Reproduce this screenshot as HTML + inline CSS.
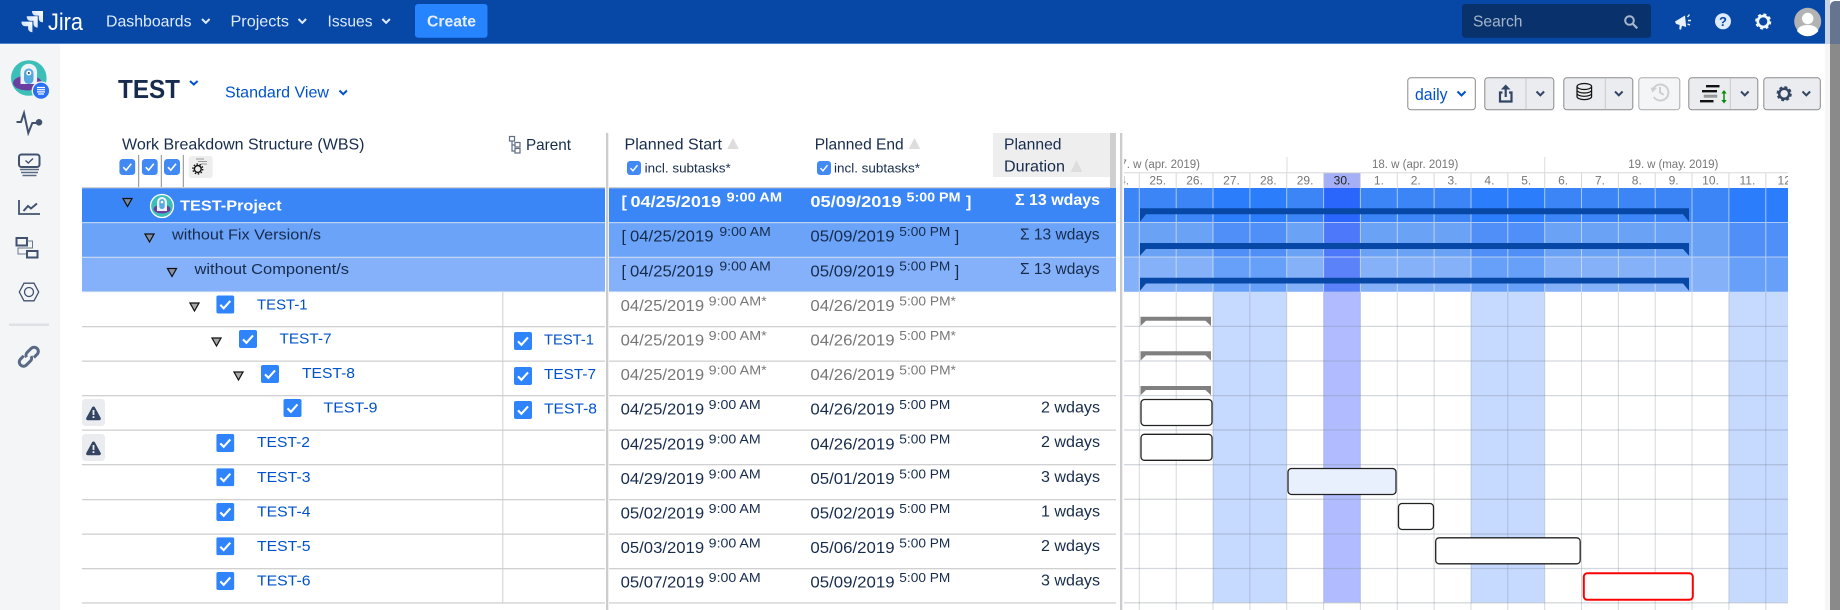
<!DOCTYPE html>
<html><head><meta charset="utf-8"><title>TEST</title>
<style>
html,body{margin:0;padding:0;background:#fff;width:1840px;height:610px;overflow:hidden}
svg{position:absolute;left:0;top:0;display:block}
text{font-family:"Liberation Sans",sans-serif}
.d{font-size:16px;fill:#172B4D}
.s{font-size:13px;fill:#172B4D}
.w{fill:#fff;font-weight:bold}
.g{fill:#777}
.l{font-size:15px;fill:#0052CC}
.day{font-size:12px;fill:#777;text-anchor:middle}
.h{font-size:16px;fill:#172B4D}
</style></head><body>
<svg width="1840" height="610" viewBox="0 0 1840 610" xmlns="http://www.w3.org/2000/svg">
<defs>
<symbol id="cb" viewBox="0 0 18 18"><rect width="18" height="18" rx="2" fill="#2F84FB"/><path d="M4 9.4l3.400 3.400L14 5.400" fill="none" stroke="#fff" stroke-width="2.100"/></symbol>
<symbol id="cs" viewBox="0 0 16 16"><rect width="16" height="16" rx="3.500" fill="#4289F3"/><path d="M4 8.200l2.800 3L12 4.800" fill="none" stroke="#fff" stroke-width="1.600"/></symbol>
<symbol id="tr" viewBox="0 0 11 10"><path d="M1 1H10L5.500 9Z" fill="#8a8a8a" fill-opacity=".75" stroke="#111" stroke-width="1.200"/></symbol>
<symbol id="wn" viewBox="0 0 23 27"><rect width="23" height="27" rx="3.500" fill="#EBECF0"/><path d="M11.500 7.500c.7 0 1.100.3 1.500 1l5.600 10.300c.7 1.200 0 2.400-1.300 2.400H5.700c-1.300 0-2-1.200-1.300-2.400L10 8.500c.4-.7.8-1 1.500-1z" fill="#344563"/><rect x="10.600" y="11" width="1.800" height="5" fill="#EBECF0"/><rect x="10.600" y="17.200" width="1.800" height="1.800" fill="#EBECF0"/></symbol>
<clipPath id="gc"><rect x="1124" y="150" width="664" height="460"/></clipPath>
<linearGradient id="jg" x1="1" y1="0" x2="0" y2="1"><stop offset="0" stop-color="#fff"/><stop offset="1" stop-color="#b9d3f5"/></linearGradient>
</defs>

<!-- backgrounds -->
<rect width="1840" height="610" fill="#fff"/>
<rect y="44" width="60" height="566" fill="#F4F5F7"/>
<rect width="1825" height="43" fill="#0747A6"/>
<rect y="43" width="1825" height="1" fill="#4C84D0"/>

<!-- nav -->
<g fill="url(#jg)">
<path d="M32 11h11v11.300c-2.600 0-4.300-1.600-4.300-4.100V15.600h-3C33.500 15.600 32 13.800 32 11z"/>
<path d="M26.700 16.300h11v11.300c-2.600 0-4.300-1.600-4.300-4.100V20.900h-3c-2.200 0-3.700-1.800-3.700-4.600z"/>
<path d="M21.400 21.600h11v10.600c-2.600 0-4.300-1.500-4.300-3.900v-2.100h-3c-2.200 0-3.700-1.800-3.700-4.600z"/>
</g>
<text x="48" y="30" font-size="24" fill="#fff" textLength="35" lengthAdjust="spacingAndGlyphs">Jira</text>
<g font-size="16" fill="#DEEBFF">
<text x="106" y="26.500" textLength="85.500" lengthAdjust="spacingAndGlyphs">Dashboards</text>
<text x="230.500" y="26.500" textLength="58.500" lengthAdjust="spacingAndGlyphs">Projects</text>
<text x="327.500" y="26.500" textLength="45" lengthAdjust="spacingAndGlyphs">Issues</text>
</g>
<g fill="none" stroke="#DEEBFF" stroke-width="2">
<path d="M202 19l3.800 3.800 3.800-3.800M298.500 19l3.800 3.800 3.800-3.800M382.300 19l3.800 3.800 3.800-3.800"/>
</g>
<rect x="415" y="4" width="72.500" height="33.700" rx="3" fill="#2684FF"/>
<text x="427" y="26.500" font-size="16" font-weight="bold" fill="#E4EEFC" textLength="49" lengthAdjust="spacingAndGlyphs">Create</text>
<rect x="1462" y="4" width="189" height="33.700" rx="3" fill="#09326C"/>
<text x="1473" y="26.500" font-size="16" fill="#A5B5CC" textLength="49.500" lengthAdjust="spacingAndGlyphs">Search</text>
<circle cx="1629.500" cy="20.500" r="4.300" fill="none" stroke="#A5B5CC" stroke-width="2"/><path d="M1632.800 23.800l4.500 4.500" stroke="#A5B5CC" stroke-width="2.200"/>
<path d="M1675 21.500l10-6 1.200 11.500-4.200-1.300-1 4-1.700-.4.300-4.300-3.600-1.100z" fill="#EAF1FC"/>
<path d="M1687.500 17l2-2.500M1688 20.500h3M1687.500 24l2.500 1" stroke="#EAF1FC" stroke-width="1.400"/>
<circle cx="1723" cy="21.300" r="8" fill="#DEEBFF"/>
<text x="1723" y="26" font-size="13" font-weight="bold" fill="#0747A6" text-anchor="middle">?</text>
<circle cx="1763.200" cy="21.500" r="5.400" fill="none" stroke="#F2F6FD" stroke-width="2.600"/>
<circle cx="1763.200" cy="21.500" r="7.200" fill="none" stroke="#F2F6FD" stroke-width="1.800" stroke-dasharray="3 2.650"/>
<circle cx="1807.700" cy="21.300" r="13.500" fill="#B3B3B3"/>
<circle cx="1807.700" cy="18.500" r="5.700" fill="#fff"/>
<path d="M1797 31c1.500-4.500 5.500-6 10.700-6s9.200 1.500 10.700 6a13.500 13.500 0 0 1-21.400 0z" fill="#fff"/>

<!-- scrollbar -->
<rect x="1825" y="0" width="5" height="44" fill="#C7D4E8"/>
<rect x="1825" y="44" width="5" height="566" fill="#F6F6F6"/>
<rect x="1830" y="1" width="14" height="60" rx="5" fill="#66758F"/>
<rect x="1830" y="44" width="10" height="566" fill="#8A8A8A"/>

<!-- sidebar icons -->
<circle cx="28.800" cy="78" r="17.800" fill="#3CBFB8"/>
<ellipse cx="27.500" cy="83" rx="14.500" ry="7.500" fill="#6B3FA0"/>
<path d="M20.500 84V72a8.300 8.300 0 0 1 16.600 0V84z" fill="#EEF3F8"/>
<rect x="24" y="68.500" width="9.500" height="15.500" rx="4.700" fill="#55A9E0"/>
<circle cx="28.800" cy="73" r="2.500" fill="#fff"/><circle cx="28.800" cy="73" r="1" fill="#335"/>
<circle cx="41" cy="90.700" r="8.700" fill="#2B6FF6" stroke="#F4F5F7" stroke-width="1.300"/>
<path d="M37 87.500h8M37 89.700h8M37 91.900h8M38 94h6" stroke="#fff" stroke-width="1.200"/>
<g fill="none" stroke="#42526E">
<path d="M16.500 122H21L24 113L28.300 133L32.300 123H37" stroke-width="2"/>
<rect x="19" y="154.500" width="20.500" height="12.500" rx="2.500" stroke-width="2"/>
<path d="M25.500 160.500l2.800 2.500 4.700-4.500" stroke-width="1.400"/>
<path d="M20 169.500h19M21 172.500h17M22.500 175.500h14" stroke-width="1.500" stroke="#5A6A85"/>
<path d="M19 200V214H40" stroke-width="1.800"/>
<path d="M23.500 211l4.500-5 3 2.500 6-5" stroke-width="2"/>
<rect x="16.500" y="238" width="10.500" height="7.500" stroke-width="2"/>
<rect x="27" y="251" width="10.500" height="6.500" stroke-width="2"/>
<path d="M27 241h5.500v7H18v6h8" stroke-width="1" stroke="#6B778C"/>
<path d="M19.300 292L24 283.200H34L38.700 292L34 300.800H24Z" stroke-width="1.300"/>
<circle cx="29" cy="292" r="4.500" stroke-width="1.300"/>
<g transform="translate(28.800 356.700) rotate(-45)" stroke="#5A6A85" stroke-width="3"><path d="M-3 -4.200H-7.500a4.200 4.200 0 0 0 0 8.400H-2a4 4 0 0 0 4-3"/><path d="M3 4.200H7.500a4.200 4.200 0 0 0 0-8.400H2a4 4 0 0 0-4 3"/></g>
</g>
<circle cx="36.500" cy="122.300" r="0" fill="#42526E"/>
<circle cx="39" cy="122.300" r="3.300" fill="#42526E"/>
<rect x="9" y="323.500" width="40" height="2.500" fill="#DFE1E6"/>

<!-- title area -->
<text x="118" y="98" font-size="26" font-weight="bold" fill="#172B4D" textLength="62" lengthAdjust="spacingAndGlyphs">TEST</text>
<path d="M190 81l3.800 3.500L197.600 81" fill="none" stroke="#0052CC" stroke-width="2"/>
<text x="225" y="97.500" font-size="16" fill="#0052CC" textLength="104" lengthAdjust="spacingAndGlyphs">Standard View</text>
<path d="M339.500 90.500l3.700 3.700 3.700-3.700" fill="none" stroke="#0052CC" stroke-width="2"/>

<!-- toolbar -->
<rect x="1407.800" y="77.800" width="67.500" height="32" rx="3" fill="#fff" stroke="#8A8A8A"/>
<text x="1415" y="100" font-size="17" fill="#0052CC" textLength="32.500" lengthAdjust="spacingAndGlyphs">daily</text>
<path d="M1457.500 91.500l4 4 4-4" fill="none" stroke="#0052CC" stroke-width="2"/>
<g fill="#EBECF0" stroke="#8A8A8A">
<rect x="1484.800" y="77.800" width="69" height="32" rx="3"/>
<rect x="1563.800" y="77.800" width="69" height="32" rx="3"/>
<rect x="1688.800" y="77.800" width="69" height="32" rx="3"/>
<rect x="1763.800" y="77.800" width="56.500" height="32" rx="3"/>
</g>
<rect x="1638.800" y="77.800" width="41" height="32" rx="3" fill="#F4F5F7" stroke="#AAAAAA"/>
<path d="M1526 78V109.500M1605.300 78V109.500M1730.300 78V109.500" stroke="#C8C8C8"/>
<g fill="none" stroke="#344563" stroke-width="2">
<path d="M1536.500 91.500l3.800 3.800 3.800-3.800M1615 91.500l3.800 3.800 3.800-3.800M1741 91.500l3.800 3.800 3.800-3.800M1802.500 91.500l3.800 3.800 3.800-3.800"/>
<path d="M1502.500 92.500H1500V101.500H1511.500V92.500H1509" stroke-width="2.200"/>
<path d="M1505.700 97V88" stroke-width="2.200"/>
</g>
<path d="M1505.700 84.500l4.800 5h-9.600z" fill="#344563"/>
<g fill="none" stroke="#111" stroke-width="1.200">
<ellipse cx="1584.300" cy="86.500" rx="7.300" ry="3"/>
<path d="M1577 86.500V96.500C1577 98.300 1580.200 99.600 1584.300 99.600S1591.600 98.300 1591.600 96.500V86.500M1577 90C1577 91.700 1580.200 93 1584.300 93S1591.600 91.700 1591.600 90M1577 93.300C1577 95 1580.200 96.300 1584.300 96.300S1591.600 95 1591.600 93.300"/>
</g>
<g fill="none" stroke="#CFCFCF" stroke-width="2"><path d="M1653.500 88.500a8 8 0 1 1 .3 8.500"/><path d="M1660 87v5.500l3.800 2.300"/></g>
<path d="M1650.500 87.500l6.500.5-4.500 4.500z" fill="#CFCFCF"/>
<rect x="1706" y="85" width="13.500" height="2.400" fill="#111"/>
<rect x="1702" y="90" width="15" height="2.400" fill="#111"/>
<rect x="1704" y="95" width="13" height="2.400" fill="#999" stroke="#888" stroke-width=".5"/>
<rect x="1700" y="100" width="13.500" height="2.400" fill="#111"/>
<path d="M1724 92.500V101" stroke="#0A8A0A" stroke-width="1.500"/>
<path d="M1724 90l2.700 3.500h-5.400zM1724 103.500l2.700-3.500h-5.400z" fill="#0A8A0A"/>
<circle cx="1784.200" cy="93.700" r="5" fill="none" stroke="#344563" stroke-width="2.500"/>
<circle cx="1784.200" cy="93.700" r="6.700" fill="none" stroke="#344563" stroke-width="1.800" stroke-dasharray="3 2.260"/>

<!-- headers -->
<text x="122" y="149.500" class="h" textLength="242.500" lengthAdjust="spacingAndGlyphs">Work Breakdown Structure (WBS)</text>
<use href="#cs" x="119.300" y="159" width="16" height="16"/>
<use href="#cs" x="141.800" y="159" width="16" height="16"/>
<use href="#cs" x="164" y="159" width="16" height="16"/>
<path d="M138.700 155V188M161.300 155V188M183.300 155V188" stroke="#8A8A8A"/>
<rect x="188.700" y="156" width="24" height="22" rx="3" fill="#EEEEEE"/>
<path d="M196 159h8M198 161.500h9M201 164h6" stroke="#999" stroke-width="1"/>
<circle cx="197.800" cy="169" r="3.400" fill="none" stroke="#111" stroke-width="1.400"/>
<circle cx="197.800" cy="169" r="4.900" fill="none" stroke="#111" stroke-width="1.400" stroke-dasharray="1.500 1.590"/>
<g fill="none" stroke="#5E6C84" stroke-width="1.200"><rect x="509.500" y="136.500" width="5" height="4.500"/><rect x="515" y="142.500" width="5" height="4.500"/><rect x="515" y="148.500" width="5" height="4.500"/><path d="M512 141V151H515M512 145H515"/></g>
<text x="526" y="150" class="h" textLength="45" lengthAdjust="spacingAndGlyphs">Parent</text>

<text x="624.500" y="149.500" class="h" textLength="97.500" lengthAdjust="spacingAndGlyphs">Planned Start</text>
<path d="M733 138l5.800 11H727.200z" fill="#DDDDDD"/>
<use href="#cs" x="627" y="161" width="14" height="14"/>
<text x="644.700" y="172.500" font-size="13" fill="#172B4D" textLength="86" lengthAdjust="spacingAndGlyphs">incl. subtasks*</text>
<text x="814.700" y="149.500" class="h" textLength="89" lengthAdjust="spacingAndGlyphs">Planned End</text>
<path d="M914.500 138l5.800 11H908.700z" fill="#DDDDDD"/>
<use href="#cs" x="817" y="161" width="14" height="14"/>
<text x="834" y="172.500" font-size="13" fill="#172B4D" textLength="86" lengthAdjust="spacingAndGlyphs">incl. subtasks*</text>
<rect x="993" y="133" width="117" height="44" fill="#EEEEEE"/>
<rect x="1110" y="133" width="6" height="55" fill="#CFCFCF"/>
<text x="1004" y="149.500" class="h" textLength="57.500" lengthAdjust="spacingAndGlyphs">Planned</text>
<text x="1004" y="171.500" class="h" textLength="61" lengthAdjust="spacingAndGlyphs">Duration</text>
<path d="M1076.500 160l5.800 12H1070.700z" fill="#DDDDDD"/>

<!-- left rows bg -->
<rect x="82" y="188" width="523" height="34.600" fill="#3B86F6"/>
<rect x="82" y="222.600" width="523" height="34.600" fill="#6AA3F7"/>
<rect x="82" y="257.200" width="523" height="34.600" fill="#84B1F9"/>
<rect x="609" y="188" width="507" height="34.600" fill="#3B86F6"/>
<rect x="609" y="222.600" width="507" height="34.600" fill="#6AA3F7"/>
<rect x="609" y="257.200" width="507" height="34.600" fill="#84B1F9"/>

<!-- gantt -->
<g clip-path="url(#gc)">
<rect x="1323.600" y="173" width="36.800" height="15" fill="#A5AFF5"/>
<path d="M1287 157V173M1544.700 157V173" stroke="#DDDDDD"/>
<path d="M1124 172.700H1788M1139.300 173V188M1176.200 173V188M1213 173V188M1249.900 173V188M1286.700 173V188M1323.600 173V188M1360.400 173V188M1397.300 173V188M1434.100 173V188M1471 173V188M1507.800 173V188M1544.700 173V188M1581.500 173V188M1618.400 173V188M1655.200 173V188M1692 173V188M1728.900 173V188M1765.800 173V188" stroke="#D8D8D8"/>
<g font-size="11.500" fill="#777">
<text x="1114" y="168" textLength="86" lengthAdjust="spacing">17. w (apr. 2019)</text>
<text x="1372" y="168" textLength="86.300" lengthAdjust="spacing">18. w (apr. 2019)</text>
<text x="1628.300" y="168" textLength="90" lengthAdjust="spacing">19. w (may. 2019)</text>
</g>
<g class="days">
<text x="1120.800" y="184.500" class="day">24.</text><text x="1157.700" y="184.500" class="day">25.</text><text x="1194.600" y="184.500" class="day">26.</text><text x="1231.500" y="184.500" class="day">27.</text><text x="1268.300" y="184.500" class="day">28.</text><text x="1305.100" y="184.500" class="day">29.</text><text x="1342" y="184.500" class="day" style="fill:#222">30.</text><text x="1378.900" y="184.500" class="day">1.</text><text x="1415.700" y="184.500" class="day">2.</text><text x="1452.500" y="184.500" class="day">3.</text><text x="1489.400" y="184.500" class="day">4.</text><text x="1526.200" y="184.500" class="day">5.</text><text x="1563.100" y="184.500" class="day">6.</text><text x="1600" y="184.500" class="day">7.</text><text x="1636.800" y="184.500" class="day">8.</text><text x="1673.600" y="184.500" class="day">9.</text><text x="1710.500" y="184.500" class="day">10.</text><text x="1747.400" y="184.500" class="day">11.</text><text x="1784.200" y="184.500" class="day">12</text>
</g>
<rect x="1124" y="188" width="664" height="34.600" fill="#3B85F6"/>
<rect x="1124" y="222.600" width="664" height="34.600" fill="#6AA2F6"/>
<rect x="1124" y="257.200" width="664" height="34.600" fill="#85B1F9"/>
<g fill="#2B7DFB"><rect x="1213" y="188" width="73.700" height="34.600"/><rect x="1471" y="188" width="73.700" height="34.600"/><rect x="1728.900" y="188" width="60" height="34.600"/></g>
<g fill="#4F8FF7"><rect x="1213" y="222.600" width="73.700" height="34.600"/><rect x="1471" y="222.600" width="73.700" height="34.600"/><rect x="1728.900" y="222.600" width="60" height="34.600"/></g>
<g fill="#66A0F9"><rect x="1213" y="257.200" width="73.700" height="34.600"/><rect x="1471" y="257.200" width="73.700" height="34.600"/><rect x="1728.900" y="257.200" width="60" height="34.600"/></g>
<g fill="#C6D9FF"><rect x="1213" y="291.800" width="73.700" height="310.700"/><rect x="1471" y="291.800" width="73.700" height="310.700"/><rect x="1728.900" y="291.800" width="60" height="310.700"/></g>
<rect x="1323.600" y="188" width="36.800" height="34.600" fill="#2A66FB"/>
<rect x="1323.600" y="222.600" width="36.800" height="34.600" fill="#4D78F9"/>
<rect x="1323.600" y="257.200" width="36.800" height="34.600" fill="#5C82FA"/>
<rect x="1323.600" y="291.800" width="36.800" height="310.700" fill="#B0BCFF"/>
<path d="M1139.300 188V292M1176.200 188V292M1213 188V292M1249.900 188V292M1286.700 188V292M1323.600 188V292M1360.400 188V292M1397.300 188V292M1434.100 188V292M1471 188V292M1507.800 188V292M1544.700 188V292M1581.500 188V292M1618.400 188V292M1655.200 188V292M1692 188V292M1728.900 188V292M1765.800 188V292M1124 222.500H1788M1124 257H1788" stroke="#DCE4F2" stroke-opacity=".7"/>
<path d="M1139.300 292V610M1176.200 292V610M1213 292V610M1249.900 292V610M1286.700 292V610M1323.600 292V610M1360.400 292V610M1397.300 292V610M1434.100 292V610M1471 292V610M1507.800 292V610M1544.700 292V610M1581.500 292V610M1618.400 292V610M1655.200 292V610M1692 292V610M1728.900 292V610M1765.800 292V610" stroke="#828C9E" stroke-opacity=".34"/>
<path d="M1124 326.400H1788M1124 361H1788M1124 395.600H1788M1124 430H1788M1124 464.700H1788M1124 499.300H1788M1124 534H1788M1124 568.500H1788M1124 602.800H1788" stroke="#828C9E" stroke-opacity=".34" stroke-width="1.300"/>
<g fill="#0747A6">
<path d="M1140 208.300H1689V221.700L1683 214.300H1146L1140 221.700Z"/>
<path d="M1140 243H1689V255.700L1683 249H1146L1140 255.700Z"/>
<path d="M1140 277.700H1689V290.700L1683 283.500H1146L1140 290.700Z"/>
</g>
<g fill="#808080">
<path d="M1140.500 316.700H1211V326L1205.500 320.800H1146L1140.500 326Z"/>
<path d="M1140.500 351.300H1211V360.600L1205.500 355.400H1146L1140.500 360.600Z"/>
<path d="M1140.500 386H1211V395.300L1205.500 390H1146L1140.500 395.300Z"/>
</g>
<g stroke="#222" stroke-width="1.300" fill="#fff">
<rect x="1141" y="399.500" width="71" height="26" rx="3.500"/>
<rect x="1141" y="434.300" width="71" height="26" rx="3.500"/>
<rect x="1288" y="468.500" width="108" height="26" rx="3.500" fill="#E8EFFD"/>
<rect x="1398.500" y="503.500" width="35" height="26" rx="3.500"/>
<rect x="1435.700" y="537.800" width="144.500" height="26" rx="3.500"/>
</g>
<rect x="1583.800" y="573.300" width="109" height="26.500" rx="3.500" fill="#fff" stroke="#FF0000" stroke-width="2"/>
</g>

<!-- left table lines -->
<g fill="#D0D0D0">
<rect x="82" y="187" width="523" height="1.300"/><rect x="609" y="187" width="501" height="1.300"/>
<rect x="82" y="326" width="523" height="1.300"/><rect x="609" y="326" width="507" height="1.300"/>
<rect x="82" y="360.500" width="523" height="1.300"/><rect x="609" y="360.500" width="507" height="1.300"/>
<rect x="82" y="395" width="523" height="1.300"/><rect x="609" y="395" width="507" height="1.300"/>
<rect x="82" y="429.500" width="523" height="1.300"/><rect x="609" y="429.500" width="507" height="1.300"/>
<rect x="82" y="464" width="523" height="1.300"/><rect x="609" y="464" width="507" height="1.300"/>
<rect x="82" y="499" width="523" height="1.300"/><rect x="609" y="499" width="507" height="1.300"/>
<rect x="82" y="533.500" width="523" height="1.300"/><rect x="609" y="533.500" width="507" height="1.300"/>
<rect x="82" y="568" width="523" height="1.300"/><rect x="609" y="568" width="507" height="1.300"/>
<rect x="82" y="602.300" width="523" height="1.300"/><rect x="609" y="602.300" width="507" height="1.300"/>
<rect x="502.300" y="292" width="1" height="310.500"/>
</g>
<g fill="#DCE4F2" fill-opacity=".75"><rect x="82" y="222" width="523" height="1.200"/><rect x="609" y="222" width="507" height="1.200"/><rect x="82" y="256.700" width="523" height="1.200"/><rect x="609" y="256.700" width="507" height="1.200"/><rect x="82" y="291.300" width="523" height="1"/><rect x="609" y="291.300" width="507" height="1"/></g>
<rect x="606" y="133" width="2.300" height="477" fill="#CCCCCC"/>
<rect x="1120" y="133" width="2.300" height="477" fill="#CCCCCC"/>

<!-- WBS column -->
<use href="#tr" x="122" y="197.500" width="11" height="10"/>
<circle cx="162" cy="206" r="11.500" fill="#3CBFB8" stroke="#fff" stroke-width="1.300"/>
<ellipse cx="162" cy="209" rx="8.500" ry="4.500" fill="#6B3FA0"/>
<path d="M157 211v-9a5 5 0 0 1 10 0v9z" fill="#EEF3F8"/><rect x="159.300" y="199" width="5.400" height="10" rx="2.700" fill="#55A9E0"/><circle cx="162" cy="202" r="1.300" fill="#fff"/>
<text x="180" y="210.500" font-size="15" class="w" textLength="101.500" lengthAdjust="spacingAndGlyphs">TEST-Project</text>
<use href="#tr" x="144" y="233" width="11" height="10"/>
<text x="172" y="239.400" font-size="15" fill="#172B4D" textLength="149" lengthAdjust="spacingAndGlyphs">without Fix Version/s</text>
<use href="#tr" x="166.500" y="267.500" width="11" height="10"/>
<text x="194.500" y="274" font-size="15" fill="#172B4D" textLength="154.500" lengthAdjust="spacingAndGlyphs">without Component/s</text>

<use href="#tr" x="189" y="302" width="11" height="10"/>
<use href="#cb" x="216.300" y="295.500" width="18" height="18"/>
<text x="257" y="309.400" class="l" textLength="50.600" lengthAdjust="spacingAndGlyphs">TEST-1</text>
<use href="#tr" x="211" y="337" width="11" height="10"/>
<use href="#cb" x="239" y="330" width="18" height="18"/>
<text x="279.500" y="343.400" class="l" textLength="52" lengthAdjust="spacingAndGlyphs">TEST-7</text>
<use href="#cb" x="514" y="332" width="18" height="18"/>
<text x="544" y="344.400" class="l" textLength="50" lengthAdjust="spacingAndGlyphs">TEST-1</text>
<use href="#tr" x="233" y="371" width="11" height="10"/>
<use href="#cb" x="261" y="365" width="18" height="18"/>
<text x="302" y="378" class="l" textLength="53" lengthAdjust="spacingAndGlyphs">TEST-8</text>
<use href="#cb" x="514" y="367" width="18" height="18"/>
<text x="544" y="379" class="l" textLength="52" lengthAdjust="spacingAndGlyphs">TEST-7</text>
<use href="#wn" x="82" y="399" width="23" height="27"/>
<use href="#cb" x="283.500" y="399" width="18" height="18"/>
<text x="323.500" y="412.400" class="l" textLength="54" lengthAdjust="spacingAndGlyphs">TEST-9</text>
<use href="#cb" x="514" y="401" width="18" height="18"/>
<text x="544" y="413.400" class="l" textLength="53" lengthAdjust="spacingAndGlyphs">TEST-8</text>
<use href="#wn" x="82" y="434" width="23" height="27"/>
<use href="#cb" x="216.300" y="434" width="18" height="18"/>
<text x="257" y="447" class="l" textLength="53" lengthAdjust="spacingAndGlyphs">TEST-2</text>
<use href="#cb" x="216.300" y="468.300" width="18" height="18"/>
<text x="257" y="482" class="l" textLength="53.500" lengthAdjust="spacingAndGlyphs">TEST-3</text>
<use href="#cb" x="216.300" y="503" width="18" height="18"/>
<text x="257" y="516.400" class="l" textLength="53.500" lengthAdjust="spacingAndGlyphs">TEST-4</text>
<use href="#cb" x="216.300" y="537.300" width="18" height="18"/>
<text x="257" y="551" class="l" textLength="53.500" lengthAdjust="spacingAndGlyphs">TEST-5</text>
<use href="#cb" x="216.300" y="572" width="18" height="18"/>
<text x="257" y="585.400" class="l" textLength="53.500" lengthAdjust="spacingAndGlyphs">TEST-6</text>

<!-- dates: summary rows -->
<g class="d w">
<text x="621.500" y="207" class="d w">[</text>
<text x="630.500" y="207" class="d w" textLength="90.500" lengthAdjust="spacingAndGlyphs">04/25/2019</text>
<text x="726.500" y="201.500" class="s w" textLength="55.500" lengthAdjust="spacingAndGlyphs">9:00 AM</text>
<text x="810.400" y="207" class="d w" textLength="91.300" lengthAdjust="spacingAndGlyphs">05/09/2019</text>
<text x="906.500" y="201.500" class="s w" textLength="54" lengthAdjust="spacingAndGlyphs">5:00 PM</text>
<text x="966" y="207" class="d w">]</text>
<text x="1015" y="205" class="d w" textLength="85" lengthAdjust="spacingAndGlyphs">Σ 13 wdays</text>
</g>
<text x="621.500" y="241.700" class="d">[</text>
<text x="630" y="241.700" class="d" textLength="83.500" lengthAdjust="spacingAndGlyphs">04/25/2019</text>
<text x="719.400" y="236.100" class="s" textLength="51.400" lengthAdjust="spacingAndGlyphs">9:00 AM</text>
<text x="810.400" y="241.700" class="d" textLength="84.200" lengthAdjust="spacingAndGlyphs">05/09/2019</text>
<text x="899.300" y="236.100" class="s" textLength="51" lengthAdjust="spacingAndGlyphs">5:00 PM</text>
<text x="954.700" y="241.700" class="d">]</text>
<text x="1020" y="239.600" class="d" textLength="79.500" lengthAdjust="spacingAndGlyphs">Σ 13 wdays</text>
<text x="621.500" y="276.300" class="d">[</text>
<text x="630" y="276.300" class="d" textLength="83.500" lengthAdjust="spacingAndGlyphs">04/25/2019</text>
<text x="719.400" y="270.700" class="s" textLength="51.400" lengthAdjust="spacingAndGlyphs">9:00 AM</text>
<text x="810.400" y="276.300" class="d" textLength="84.200" lengthAdjust="spacingAndGlyphs">05/09/2019</text>
<text x="899.300" y="270.700" class="s" textLength="51" lengthAdjust="spacingAndGlyphs">5:00 PM</text>
<text x="954.700" y="276.300" class="d">]</text>
<text x="1020" y="274.200" class="d" textLength="79.500" lengthAdjust="spacingAndGlyphs">Σ 13 wdays</text>

<!-- derived rows (gray) -->
<text x="620.600" y="310.900" class="d g" textLength="83.500" lengthAdjust="spacingAndGlyphs">04/25/2019</text>
<text x="708.700" y="305.300" class="s g" textLength="58" lengthAdjust="spacingAndGlyphs">9:00 AM*</text>
<text x="810.400" y="310.900" class="d g" textLength="84.200" lengthAdjust="spacingAndGlyphs">04/26/2019</text>
<text x="899.300" y="305.300" class="s g" textLength="56.600" lengthAdjust="spacingAndGlyphs">5:00 PM*</text>
<text x="620.600" y="345.500" class="d g" textLength="83.500" lengthAdjust="spacingAndGlyphs">04/25/2019</text>
<text x="708.700" y="339.900" class="s g" textLength="58" lengthAdjust="spacingAndGlyphs">9:00 AM*</text>
<text x="810.400" y="345.500" class="d g" textLength="84.200" lengthAdjust="spacingAndGlyphs">04/26/2019</text>
<text x="899.300" y="339.900" class="s g" textLength="56.600" lengthAdjust="spacingAndGlyphs">5:00 PM*</text>
<text x="620.600" y="380.100" class="d g" textLength="83.500" lengthAdjust="spacingAndGlyphs">04/25/2019</text>
<text x="708.700" y="374.500" class="s g" textLength="58" lengthAdjust="spacingAndGlyphs">9:00 AM*</text>
<text x="810.400" y="380.100" class="d g" textLength="84.200" lengthAdjust="spacingAndGlyphs">04/26/2019</text>
<text x="899.300" y="374.500" class="s g" textLength="56.600" lengthAdjust="spacingAndGlyphs">5:00 PM*</text>

<!-- task rows -->
<text x="620.600" y="414.700" class="d" textLength="83.500" lengthAdjust="spacingAndGlyphs">04/25/2019</text>
<text x="708.700" y="409.100" class="s" textLength="52" lengthAdjust="spacingAndGlyphs">9:00 AM</text>
<text x="810.400" y="414.700" class="d" textLength="84.200" lengthAdjust="spacingAndGlyphs">04/26/2019</text>
<text x="899.300" y="409.100" class="s" textLength="51" lengthAdjust="spacingAndGlyphs">5:00 PM</text>
<text x="1041" y="412.600" class="d" textLength="59" lengthAdjust="spacingAndGlyphs">2 wdays</text>
<text x="620.600" y="449.300" class="d" textLength="83.500" lengthAdjust="spacingAndGlyphs">04/25/2019</text>
<text x="708.700" y="443.700" class="s" textLength="52" lengthAdjust="spacingAndGlyphs">9:00 AM</text>
<text x="810.400" y="449.300" class="d" textLength="84.200" lengthAdjust="spacingAndGlyphs">04/26/2019</text>
<text x="899.300" y="443.700" class="s" textLength="51" lengthAdjust="spacingAndGlyphs">5:00 PM</text>
<text x="1041" y="447.200" class="d" textLength="59" lengthAdjust="spacingAndGlyphs">2 wdays</text>
<text x="620.600" y="483.900" class="d" textLength="83.500" lengthAdjust="spacingAndGlyphs">04/29/2019</text>
<text x="708.700" y="478.300" class="s" textLength="52" lengthAdjust="spacingAndGlyphs">9:00 AM</text>
<text x="810.400" y="483.900" class="d" textLength="84.200" lengthAdjust="spacingAndGlyphs">05/01/2019</text>
<text x="899.300" y="478.300" class="s" textLength="51" lengthAdjust="spacingAndGlyphs">5:00 PM</text>
<text x="1041" y="481.800" class="d" textLength="59" lengthAdjust="spacingAndGlyphs">3 wdays</text>
<text x="620.600" y="518.500" class="d" textLength="83.500" lengthAdjust="spacingAndGlyphs">05/02/2019</text>
<text x="708.700" y="512.900" class="s" textLength="52" lengthAdjust="spacingAndGlyphs">9:00 AM</text>
<text x="810.400" y="518.500" class="d" textLength="84.200" lengthAdjust="spacingAndGlyphs">05/02/2019</text>
<text x="899.300" y="512.900" class="s" textLength="51" lengthAdjust="spacingAndGlyphs">5:00 PM</text>
<text x="1041" y="516.400" class="d" textLength="59" lengthAdjust="spacingAndGlyphs">1 wdays</text>
<text x="620.600" y="553.100" class="d" textLength="83.500" lengthAdjust="spacingAndGlyphs">05/03/2019</text>
<text x="708.700" y="547.500" class="s" textLength="52" lengthAdjust="spacingAndGlyphs">9:00 AM</text>
<text x="810.400" y="553.100" class="d" textLength="84.200" lengthAdjust="spacingAndGlyphs">05/06/2019</text>
<text x="899.300" y="547.500" class="s" textLength="51" lengthAdjust="spacingAndGlyphs">5:00 PM</text>
<text x="1041" y="551" class="d" textLength="59" lengthAdjust="spacingAndGlyphs">2 wdays</text>
<text x="620.600" y="587.700" class="d" textLength="83.500" lengthAdjust="spacingAndGlyphs">05/07/2019</text>
<text x="708.700" y="582.100" class="s" textLength="52" lengthAdjust="spacingAndGlyphs">9:00 AM</text>
<text x="810.400" y="587.700" class="d" textLength="84.200" lengthAdjust="spacingAndGlyphs">05/09/2019</text>
<text x="899.300" y="582.100" class="s" textLength="51" lengthAdjust="spacingAndGlyphs">5:00 PM</text>
<text x="1041" y="585.600" class="d" textLength="59" lengthAdjust="spacingAndGlyphs">3 wdays</text>
</svg>
</body></html>
